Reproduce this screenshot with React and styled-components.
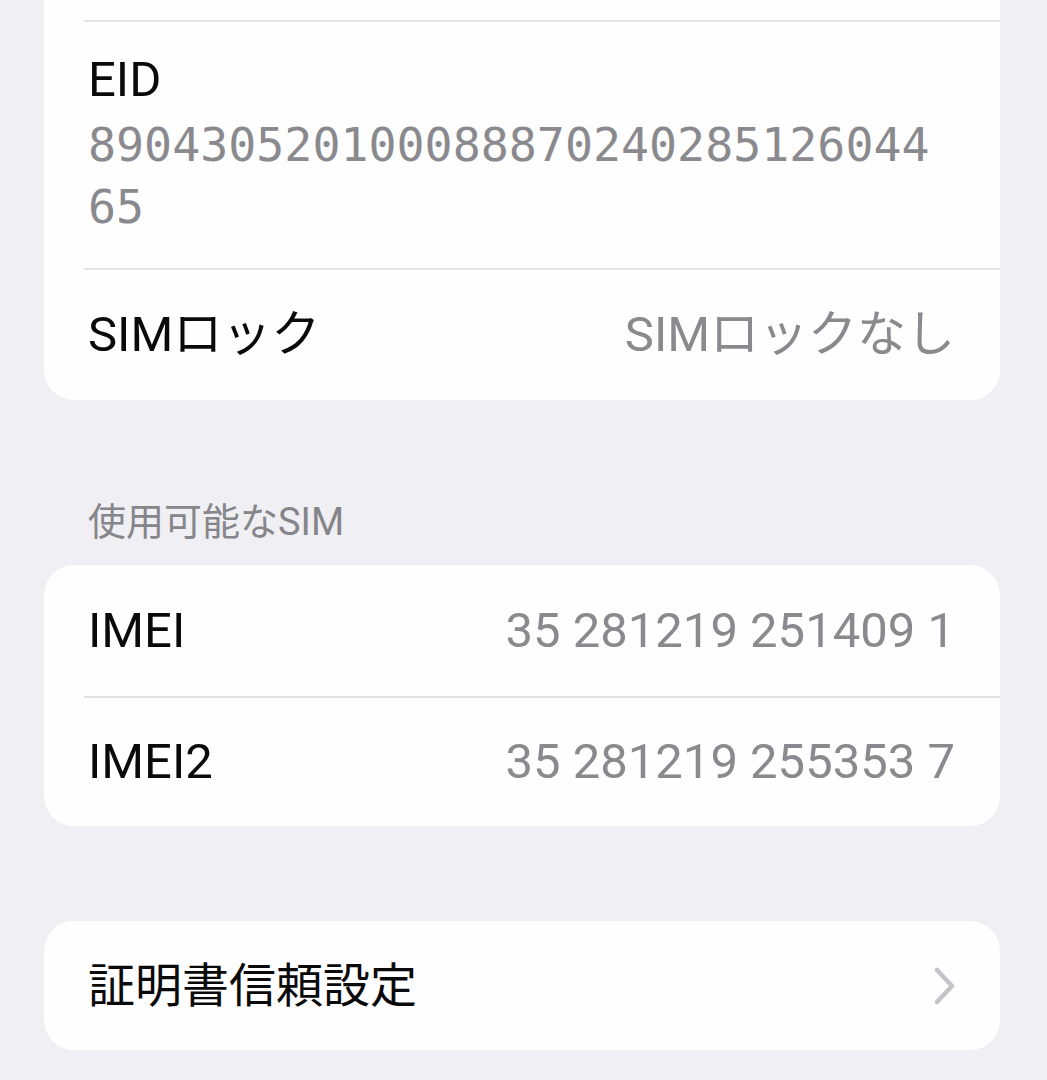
import React from "react";
import styled, { createGlobalStyle } from "styled-components";

const Global = createGlobalStyle`
  html, body {
    margin: 0;
    padding: 0;
    background: #efeff4;
  }
  body {
    font-family: Roboto, "Noto Sans CJK JP", sans-serif;
    -webkit-font-smoothing: antialiased;
  }
`;

const Page = styled.div`
  display: flex;
  flex-direction: column;
  padding: 0 47px 0 44px;
  min-height: 1080px;
  box-sizing: border-box;
  background: #efeff4;
`;

const Card = styled.div`
  background: #fefefe;
  border-radius: ${(p) => (p.$cutTop ? "0 0 30px 30px" : "30px")};
  padding: ${(p) => (p.$cutTop ? "20px" : "0")} 0 0 40px;
  margin-top: ${(p) => p.$gap || 0}px;
  display: flex;
  flex-direction: column;
`;

const Row = styled.div`
  display: flex;
  align-items: center;
  justify-content: space-between;
  min-height: ${(p) => p.$h || 130}px;
  padding: 0 45px 0 4px;
  border-top: ${(p) => (p.$divider ? "2px solid #e2e2e6" : "none")};
  box-sizing: border-box;
`;

const StackRow = styled.div`
  display: flex;
  flex-direction: column;
  padding: 28px 45px 30px 4px;
  border-top: ${(p) => (p.$divider ? "2px solid #e2e2e6" : "none")};
`;

const Label = styled.div`
  font-size: ${(p) => p.$size || 49}px;
  line-height: 60px;
  color: #0a0a0a;
  white-space: nowrap;
`;

const Value = styled.div`
  font-size: 49px;
  line-height: 60px;
  color: #8a8a8e;
  white-space: nowrap;
`;

const MonoValue = styled.div`
  font-family: "DejaVu Sans Mono", "Liberation Mono", monospace;
  font-size: 46.6px;
  line-height: 62px;
  color: #8a8a8e;
  max-width: 30ch;
  word-break: break-all;
  margin-top: 4px;
`;

const SectionHeader = styled.div`
  font-size: 38px;
  line-height: 44px;
  color: #86868a;
  padding: 100px 0 21px 44px;
`;

const Chevron = styled.svg`
  width: 22px;
  height: 38px;
  display: block;
  margin-right: -1px;
`;

export default function App() {
  return (
    <>
      <Global />
      <Page>
        <Card $cutTop>
          <StackRow $divider>
            <Label>EID</Label>
            <MonoValue>89043052010008887024028512604465</MonoValue>
          </StackRow>
          <Row $divider $h={132}>
            <Label>SIMロック</Label>
            <Value>SIMロックなし</Value>
          </Row>
        </Card>

        <SectionHeader>使用可能なSIM</SectionHeader>

        <Card>
          <Row $h={131}>
            <Label>IMEI</Label>
            <Value>35 281219 251409 1</Value>
          </Row>
          <Row $divider $h={130}>
            <Label>IMEI2</Label>
            <Value>35 281219 255353 7</Value>
          </Row>
        </Card>

        <Card $gap={95}>
          <Row $h={129}>
            <Label $size={47}>証明書信頼設定</Label>
            <Chevron viewBox="0 0 22 38" fill="none">
              <path
                d="M3 3 L18 19 L3 35"
                stroke="#c4c4c8"
                strokeWidth="4.5"
                strokeLinecap="round"
                strokeLinejoin="round"
              />
            </Chevron>
          </Row>
        </Card>
      </Page>
    </>
  );
}
